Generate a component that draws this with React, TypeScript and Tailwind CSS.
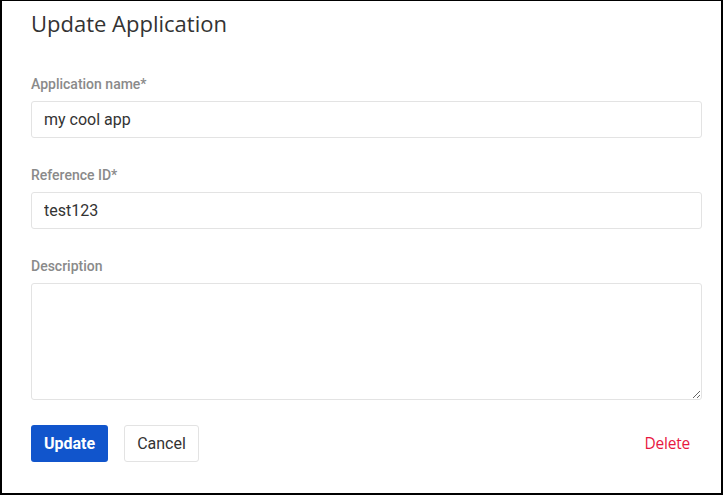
import React, { useState } from 'react';

export default function App() {
  const [name, setName] = useState('my cool app');
  const [refId, setRefId] = useState('test123');
  const [description, setDescription] = useState('');

  const labelClass =
    "block text-[14px] leading-[20px] font-medium text-[#8a8a8a] font-['Roboto',sans-serif]";
  const inputClass =
    "block w-full h-[37px] px-[12px] text-[16px] text-[#333333] font-['Roboto',sans-serif] border border-[#e3e3e3] rounded-[3px] bg-white outline-none";

  return (
    <div className="w-[723px] h-[495px] bg-white border-2 border-t border-black">
      <form className="pt-[7px] pl-[29px] pr-[19px]" onSubmit={(e) => e.preventDefault()}>
        <h1 className="text-[22px] leading-[30px] text-[#333333] font-['Open_Sans',sans-serif]">
          Update Application
        </h1>

        <div className="mt-[36px]">
          <label className={labelClass}>Application name*</label>
          <input
            className={`${inputClass} mt-[7px]`}
            value={name}
            onChange={(e) => setName(e.target.value)}
          />
        </div>

        <div className="mt-[27px]">
          <label className={labelClass}>Reference ID*</label>
          <input
            className={`${inputClass} mt-[7px]`}
            value={refId}
            onChange={(e) => setRefId(e.target.value)}
          />
        </div>

        <div className="mt-[27px]">
          <label className={labelClass}>Description</label>
          <textarea
            className="block w-full h-[117px] mt-[7px] px-[12px] py-[8px] text-[16px] text-[#333333] font-['Roboto',sans-serif] border border-[#e3e3e3] rounded-[3px] bg-white outline-none"
            value={description}
            onChange={(e) => setDescription(e.target.value)}
          />
        </div>

        <div className="mt-[25px] flex items-center">
          <button
            type="submit"
            className="h-[37px] w-[77px] rounded-[3px] bg-[#1155cc] text-white text-[16px] font-bold font-['Roboto',sans-serif]"
          >
            Update
          </button>
          <button
            type="button"
            className="ml-[16px] h-[37px] w-[75px] rounded-[3px] border border-[#e3e3e3] bg-white text-[#333333] text-[16px] font-['Roboto',sans-serif]"
          >
            Cancel
          </button>
          <button
            type="button"
            className="ml-auto mr-[12px] text-[15.5px] tracking-[-0.2px] text-[#e8173f] font-['Open_Sans',sans-serif]"
          >
            Delete
          </button>
        </div>
      </form>
    </div>
  );
}
